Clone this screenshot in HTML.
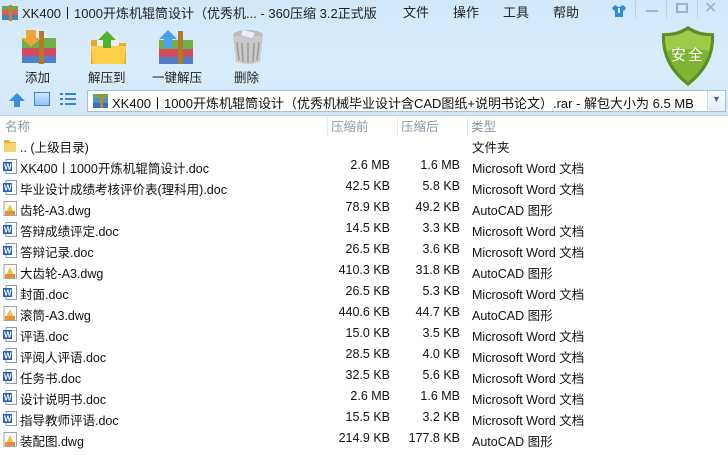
<!DOCTYPE html>
<html><head><meta charset="utf-8"><style>
*{margin:0;padding:0;box-sizing:border-box}
body{width:728px;height:455px;overflow:hidden;font-family:"Liberation Sans","Noto Sans CJK SC",sans-serif;font-size:12.5px;color:#111;background:#fff;position:relative}
.top{position:absolute;left:0;top:0;width:728px;height:116px;background:linear-gradient(#d2e8f9,#d9ecfa 60%,#d4e8f8);border-bottom:1px solid #b9cfe2}
.t{position:absolute;white-space:nowrap}
.menu{top:2px;font-size:13px;color:#222}
.btn{position:absolute;top:28px;width:40px;height:38px}
.lbl{top:67px;font-size:12.5px;color:#222}
.addr{position:absolute;left:87px;top:90px;width:639px;height:22px;background:#fff;border:1px solid #a9c1d8}
.dd{position:absolute;right:0;top:0;width:18px;height:20px;border-left:1px solid #d0dbe6;background:linear-gradient(#fafcfe,#e6eef6)}
.hdr{position:absolute;top:116px;left:0;width:728px;height:21px;background:#fff}
.hdr span{position:absolute;top:0px;color:#8a98a6;font-size:12.5px}
.sep{position:absolute;top:117px;width:1px;height:19px;background:#e4e9ee}
.row{position:absolute;left:0;width:728px;height:21px}
.row span{position:absolute;top:0px;white-space:nowrap}
.r{text-align:right}
.ic{position:absolute;left:3px;top:1px;width:14px;height:15px}
</style></head><body>
<div class="top"></div>
<svg style="position:absolute;left:2px;top:5px" width="16" height="16"><rect x="0" y="1" width="16" height="4" fill="#6aa84f"/><rect x="0" y="5" width="16" height="5" fill="#d95b5b"/><rect x="0" y="10" width="16" height="5" fill="#4a7fc7"/><rect x="7" y="0" width="3" height="16" fill="#b8862b"/></svg>
<div class="t" style="left:22px;top:3px;font-size:13px;color:#222">XK400丨1000开炼机辊筒设计（优秀机... - 360压缩 3.2正式版</div>
<div class="t menu" style="left:403px">文件</div>
<div class="t menu" style="left:453px">操作</div>
<div class="t menu" style="left:503px">工具</div>
<div class="t menu" style="left:553px">帮助</div>
<svg style="position:absolute;left:611px;top:4px" width="16" height="14"><path d="M4 1 L1 4 L3 7 L4 6 V13 H12 V6 L13 7 L15 4 L12 1 L10 2 Q8 4 6 2Z" fill="#2a8de0"/><path d="M7 4 H9 V9 H7Z" fill="#fff"/></svg>
<div style="position:absolute;left:635px;top:0;width:1px;height:18px;background:#bcd3e6"></div>
<div style="position:absolute;left:646px;top:10px;width:12px;height:2px;background:#9bb4c9"></div>
<div style="position:absolute;left:666px;top:0;width:1px;height:18px;background:#bcd3e6"></div>
<div style="position:absolute;left:676px;top:3px;width:12px;height:10px;border:2px solid #9bb4c9"></div>
<div style="position:absolute;left:697px;top:0;width:1px;height:18px;background:#bcd3e6"></div>
<div class="t" style="left:704px;top:-2px;font-size:16px;color:#9bb4c9">✕</div>
<svg class="btn" style="left:20px"><rect x="2" y="10" width="34" height="10" fill="#6cb04a"/><rect x="2" y="20" width="34" height="8" fill="#d24b5f"/><rect x="2" y="28" width="34" height="7" fill="#4e7fc8"/><rect x="19" y="3" width="5" height="33" fill="#b07a2a"/><path d="M6 2 H16 V10 H21 L11 19 L1 10 H6Z" fill="#f0a43a"/></svg>
<svg class="btn" style="left:89px"><path d="M2 12 H14 L17 15 H37 V36 H2Z" fill="#e8a92a"/><rect x="8" y="8" width="22" height="14" fill="#eee"/><path d="M2 18 H37 L35 36 H4Z" fill="#fbcf47"/><path d="M18 3 L27 12 H22 V20 H14 V12 H9Z" fill="#53b230"/></svg>
<svg class="btn" style="left:157px"><rect x="2" y="12" width="34" height="9" fill="#6cb04a"/><rect x="2" y="21" width="34" height="8" fill="#d24b5f"/><rect x="2" y="29" width="34" height="7" fill="#4e7fc8"/><rect x="21" y="3" width="5" height="33" fill="#b07a2a"/><path d="M11 2 L20 11 H15 V20 H7 V11 H2Z" fill="#4aa1e8"/></svg>
<svg class="btn" style="left:228px"><ellipse cx="20" cy="7" rx="15" ry="5" fill="#bbb"/><path d="M5 8 L8 34 Q20 38 32 34 L35 8Z" fill="#c9c9c9"/><path d="M9 14 L11 32 M14 15 L15 34 M20 15 V35 M26 15 L25 34 M31 14 L29 32" stroke="#999" stroke-width="1.5"/><path d="M15 2 L27 5 L24 10 L13 7Z" fill="#eef"/></svg>
<div class="t lbl" style="left:25px">添加</div>
<div class="t lbl" style="left:88px">解压到</div>
<div class="t lbl" style="left:152px">一键解压</div>
<div class="t lbl" style="left:234px">删除</div>
<svg style="position:absolute;left:660px;top:25px" width="56" height="62"><path d="M28 1 Q40 9 54 8 Q56 40 28 61 Q0 40 2 8 Q16 9 28 1Z" fill="#5c8e22"/><path d="M28 5 Q39 12 51 11 Q52 38 28 57 Q4 38 5 11 Q17 12 28 5Z" fill="#7fb235"/><path d="M28 5 Q39 12 51 11 Q51 20 49 26 Q28 22 7 26 Q5 20 5 11 Q17 12 28 5Z" fill="#9ccb4a"/></svg>
<div class="t" style="left:671px;top:44px;font-size:15px;color:#fff;letter-spacing:2px">安全</div>
<svg style="position:absolute;left:8px;top:92px" width="18" height="16"><path d="M9 1 L17 9 H12 V15 H6 V9 H1Z" fill="#3d8fdc"/></svg>
<div style="position:absolute;left:34px;top:92px;width:16px;height:14px;border:1px solid #3a86d0;background:linear-gradient(#cfe6fb,#8fc2ef)"></div>
<svg style="position:absolute;left:60px;top:92px" width="16" height="15"><g fill="#3a86d0"><rect x="0" y="1" width="3" height="2"/><rect x="5" y="1" width="11" height="2"/><rect x="0" y="6" width="3" height="2"/><rect x="5" y="6" width="11" height="2"/><rect x="0" y="11" width="3" height="2"/><rect x="5" y="11" width="11" height="2"/></g></svg>
<div class="addr"><div class="dd"><div class="t" style="left:4px;top:3px;font-size:9px;color:#567">▼</div></div></div>
<svg style="position:absolute;left:93px;top:94px" width="15" height="14"><rect x="0" y="0" width="15" height="4" fill="#6aa84f"/><rect x="0" y="4" width="15" height="5" fill="#4a8fd7"/><rect x="0" y="9" width="15" height="5" fill="#3e6fb8"/><rect x="7" y="0" width="3" height="14" fill="#b8862b"/></svg>
<div class="t" style="left:112px;top:93px;font-size:13px;color:#111">XK400丨1000开炼机辊筒设计（优秀机械毕业设计含CAD图纸+说明书论文）.rar - 解包大小为 6.5 MB</div>
<div class="hdr"><span style="left:5px">名称</span><span style="left:331px">压缩前</span><span style="left:401px">压缩后</span><span style="left:471px">类型</span></div>
<div class="sep" style="left:327px"></div><div class="sep" style="left:397px"></div><div class="sep" style="left:467px"></div>
<div class="row" style="top:137px"><svg class="ic" viewBox="0 0 14 15"><path d="M1 2 H6 L7 4 H13 V14 H1Z" fill="#e8b23a"/><path d="M1 5 H13 V14 H1Z" fill="#f7d46a"/></svg><span style="left:20px">.. (上级目录)</span><span style="left:472px">文件夹</span></div>
<div id="rows"></div>
<script>
var d=[["XK400丨1000开炼机辊筒设计.doc","2.6 MB","1.6 MB","w"],["毕业设计成绩考核评价表(理科用).doc","42.5 KB","5.8 KB","w"],["齿轮-A3.dwg","78.9 KB","49.2 KB","c"],["答辩成绩评定.doc","14.5 KB","3.3 KB","w"],["答辩记录.doc","26.5 KB","3.6 KB","w"],["大齿轮-A3.dwg","410.3 KB","31.8 KB","c"],["封面.doc","26.5 KB","5.3 KB","w"],["滚筒-A3.dwg","440.6 KB","44.7 KB","c"],["评语.doc","15.0 KB","3.5 KB","w"],["评阅人评语.doc","28.5 KB","4.0 KB","w"],["任务书.doc","32.5 KB","5.6 KB","w"],["设计说明书.doc","2.6 MB","1.6 MB","w"],["指导教师评语.doc","15.5 KB","3.2 KB","w"],["装配图.dwg","214.9 KB","177.8 KB","c"]];
var h="";d.forEach(function(r,i){var t=158+i*21;
var ic=r[3]=="w"?'<svg class="ic" viewBox="0 0 14 15"><path d="M3 0.5 H13.5 V14.5 H3Z" fill="#fff" stroke="#8a9bb0"/><rect x="0" y="3" width="9" height="9" fill="#2b5fb3"/><text x="1" y="10.5" font-size="8" fill="#fff" font-family="Liberation Sans" font-weight="bold">W</text></svg>':'<svg class="ic" viewBox="0 0 14 15"><path d="M1 0.5 H13.5 V14.5 H1Z" fill="#fff" stroke="#9aa"/><path d="M2 14 L7 3 L12 14Z" fill="#f1c232"/><rect x="2" y="10" width="10" height="4" fill="#e69138"/></svg>';
h+='<div class="row" style="top:'+t+'px">'+ic+'<span style="left:20px">'+r[0]+'</span><span class="r" style="right:338px">'+r[1]+'</span><span class="r" style="right:268px">'+r[2]+'</span><span style="left:472px">'+(r[3]=="w"?"Microsoft Word 文档":"AutoCAD 图形")+'</span></div>';});
document.getElementById("rows").outerHTML=h;
</script>
</body></html>
